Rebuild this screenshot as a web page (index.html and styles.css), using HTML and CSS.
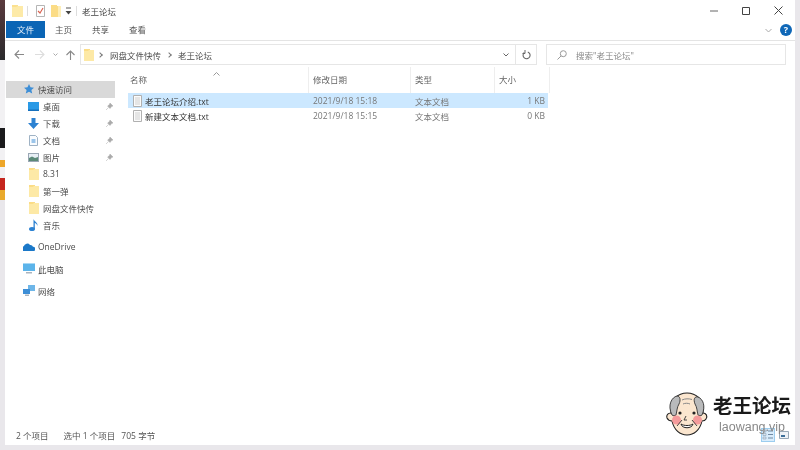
FILE: index.html
```html
<!DOCTYPE html>
<html lang="zh-CN">
<head>
<meta charset="utf-8">
<title>老王论坛</title>
<link rel="stylesheet" href="styles.css">
</head>
<body>
<div class="desktop">
  <div class="wall">
    <div class="w-photo"></div>
    <div class="w-pale"></div>
    <div class="w-dark"></div>
    <div class="w-gap"></div>
    <div class="w-orange"></div>
    <div class="w-gap2"></div>
    <div class="w-red"></div>
    <div class="w-yellow"></div>
  </div>
  <main class="window">
    <header class="titlebar">
      <svg class="ico qa-first" width="11" height="13" viewBox="0 0 11 13"><path d="M0 1h6v1h5v11H0z" fill="#fbe08f"/><path d="M0 3h4l2-1h5v11H0z" fill="#fdeaa8"/></svg>
      <span class="tsep"></span>
      <svg class="ico qa-doc" width="9" height="12" viewBox="0 0 9 12"><path d="M.5.5h8v11h-8z" fill="#fff" stroke="#b5b5b5"/><path d="M2 6l2 2 3-5" fill="none" stroke="#d9604f" stroke-width="1.100"/></svg>
      <svg class="ico qa-fold" width="10" height="13" viewBox="0 0 10 13"><path d="M0 1h6v1h4v11H0z" fill="#fbdc86"/><path d="M7 2h3v11H7z" fill="#fdeeb9"/></svg>
      <svg class="ico qa-down" width="7" height="8" viewBox="0 0 7 8"><path d="M1 1h5" stroke="#555" fill="none"/><path d="M.5 4h6L3.500 7.500z" fill="#444"/></svg>
      <span class="tsep sep2"></span>
      <span class="title">老王论坛</span>
      <div class="winctl">
        <svg width="8" height="8" viewBox="0 0 8 8"><path d="M0 4h8" stroke="#666"/></svg>
        <svg width="8" height="8" viewBox="0 0 8 8"><path d="M.5.5h7v7h-7z" fill="none" stroke="#444"/></svg>
        <svg width="9" height="9" viewBox="0 0 9 9"><path d="M.5.5l8 8M8.500.5l-8 8" stroke="#444" fill="none"/></svg>
      </div>
    </header>
    <nav class="ribbon">
      <span class="tab active">文件</span>
      <span class="tab">主页</span>
      <span class="tab">共享</span>
      <span class="tab">查看</span>
      <svg class="rib-chev" width="7" height="5" viewBox="0 0 7 5"><path d="M.5 1l3 3 3-3" fill="none" stroke="#aaa"/></svg>
      <span class="help">?</span>
    </nav>
    <div class="addressbar">
      <div class="navbtns">
        <svg width="10" height="9" viewBox="0 0 10 9"><path d="M5 .5L1 4.500l4 4M1 4.500h9" fill="none" stroke="#888" stroke-width="1.100"/></svg>
        <svg class="nav-fwd" width="10" height="9" viewBox="0 0 10 9"><path d="M5 .5l4 4-4 4M9 4.500H0" fill="none" stroke="#ddd" stroke-width="1.100"/></svg>
        <svg width="5" height="4" viewBox="0 0 5 4"><path d="M.5 .5l2 2 2-2" fill="none" stroke="#aaa"/></svg>
        <svg width="9" height="10" viewBox="0 0 9 10"><path d="M.5 5l4-4 4 4M4.500 1v9" fill="none" stroke="#888" stroke-width="1.100"/></svg>
      </div>
      <div class="pathbox">
        <svg width="10" height="12" viewBox="0 0 10 12"><path d="M0 0h6v1h4v11H0z" fill="#fbdc86"/><path d="M0 2h4l1-1h5v11H0z" fill="#fde9a6"/></svg>
        <span class="crumb-sep"></span>
        <span class="crumb">网盘文件快传</span>
        <span class="crumb-sep"></span>
        <span class="crumb">老王论坛</span>
        <svg class="path-chev" width="6" height="4" viewBox="0 0 6 4"><path d="M.5.500l2.500 2.500L5.500.5" fill="none" stroke="#666"/></svg>
      </div>
      <div class="refresh">
        <svg width="9" height="10" viewBox="0 0 9 10"><path d="M2.300 2.500a3.500 3.500 0 1 0 3.500-.6" fill="none" stroke="#666" stroke-width="1.100"/><path d="M3 0v3.500H.5" fill="none" stroke="#666"/></svg>
      </div>
      <div class="search">
        <svg width="10" height="10" viewBox="0 0 10 10"><circle cx="6.300" cy="3.700" r="3" fill="none" stroke="#999"/><path d="M4 6L.5 9.500" stroke="#999" fill="none"/></svg>
        <span>搜索"老王论坛"</span>
      </div>
    </div>
    <div class="body">
      <aside class="sidebar">
        <div class="side-row top selected">
          <svg width="10" height="10" viewBox="0 0 10 10"><path d="M5 0l1.500 3.300 3.500.4-2.600 2.300.8 3.500L5 7.700 1.800 9.500l.8-3.500L0 3.700l3.500-.4z" fill="#3d8ed6"/></svg>
          <span>快速访问</span>
        </div>
        <div class="side-row">
          <svg width="11" height="9" viewBox="0 0 11 9"><path d="M0 0h11v8.500H0z" fill="#2a9ae6"/><path d="M0 7.500h11v1.500H0z" fill="#1570bd"/></svg>
          <span>桌面</span>
          <svg class="pin" width="7" height="7" viewBox="0 0 7 7"><path d="M4 0l3 3-1.500.6L4 5.500 1.600 3 3.500 1.500zM2.500 4.500L0 7" fill="#aaa" stroke="#aaa" stroke-width=".5"/></svg>
        </div>
        <div class="side-row">
          <svg width="11" height="11" viewBox="0 0 11 11"><path d="M3.500 0h4v5H11l-5.500 6L0 5h3.500z" fill="#2d82d2"/></svg>
          <span>下载</span>
          <svg class="pin" width="7" height="7" viewBox="0 0 7 7"><path d="M4 0l3 3-1.500.6L4 5.500 1.600 3 3.500 1.500zM2.500 4.500L0 7" fill="#aaa" stroke="#aaa" stroke-width=".5"/></svg>
        </div>
        <div class="side-row">
          <svg width="11" height="11" viewBox="0 0 11 11"><path d="M1.500.5h6l2 2v8h-8z" fill="#fafcfe" stroke="#9fb2c4"/><path d="M3.500 5h4M3.500 7h4" stroke="#3d8ed6"/></svg>
          <span>文档</span>
          <svg class="pin" width="7" height="7" viewBox="0 0 7 7"><path d="M4 0l3 3-1.500.6L4 5.500 1.600 3 3.500 1.500zM2.500 4.500L0 7" fill="#aaa" stroke="#aaa" stroke-width=".5"/></svg>
        </div>
        <div class="side-row">
          <svg width="11" height="9" viewBox="0 0 11 9"><path d="M0 0h11v9H0z" fill="#9aa7b4"/><path d="M1 1h9v7H1z" fill="#e8eff5"/><path d="M1 5l3-1.500L7 5l3-1v4H1z" fill="#5b8a78"/></svg>
          <span>图片</span>
          <svg class="pin" width="7" height="7" viewBox="0 0 7 7"><path d="M4 0l3 3-1.500.6L4 5.500 1.600 3 3.500 1.500zM2.500 4.500L0 7" fill="#aaa" stroke="#aaa" stroke-width=".5"/></svg>
        </div>
        <div class="side-row">
          <svg class="narrow" width="10" height="12" viewBox="0 0 10 12"><path d="M0 0h6v1h4v11H0z" fill="#fbdc86"/><path d="M0 2h4l1-1h5v11H0z" fill="#fde9a6"/></svg>
          <span>8.31</span>
        </div>
        <div class="side-row">
          <svg class="narrow" width="10" height="12" viewBox="0 0 10 12"><path d="M0 0h6v1h4v11H0z" fill="#fbdc86"/><path d="M0 2h4l1-1h5v11H0z" fill="#fde9a6"/></svg>
          <span>第一弹</span>
        </div>
        <div class="side-row">
          <svg class="narrow" width="10" height="12" viewBox="0 0 10 12"><path d="M0 0h6v1h4v11H0z" fill="#fbdc86"/><path d="M0 2h4l1-1h5v11H0z" fill="#fde9a6"/></svg>
          <span>网盘文件快传</span>
        </div>
        <div class="side-row">
          <svg class="narrow" width="10" height="12" viewBox="0 0 10 12"><ellipse cx="3" cy="10" rx="3" ry="2" fill="#2d82d2"/><path d="M4.500 10V0c.5 2.500 4.500 3 4 7-.5-2-2-3-2.700-3V10z" fill="#2d82d2"/></svg>
          <span>音乐</span>
        </div>
        <div class="side-row top wide gap-a">
          <svg width="12" height="8" viewBox="0 0 12 8"><path d="M0 8a2.500 2.500 0 0 1 .8-4.700A3.500 3.500 0 0 1 7 2a2.800 2.800 0 0 1 3 1.800A2.200 2.200 0 0 1 11 8z" fill="#1b78c8"/></svg>
          <span>OneDrive</span>
        </div>
        <div class="side-row top wide gap-b">
          <svg width="12" height="11" viewBox="0 0 12 11"><path d="M0 0h12v8H0z" fill="#5cb4ea"/><path d="M0 0h12v1H0z" fill="#a8d8f4"/><path d="M3 9h6v1.500H3z" fill="#aab4be"/></svg>
          <span>此电脑</span>
        </div>
        <div class="side-row top wide gap-b">
          <svg width="12" height="11" viewBox="0 0 12 11"><path d="M5 0h7v6H5z" fill="#6eb6e8"/><path d="M0 4h7v5H0z" fill="#3d8ed6"/><path d="M2 9.500h4v1.500H2z" fill="#aab4be"/></svg>
          <span>网络</span>
        </div>
      </aside>
      <section class="files">
        <div class="cols head">
          <span class="name">名称<svg class="sort" width="7" height="4" viewBox="0 0 7 4"><path d="M.5 3.500l3-3 3 3" fill="none" stroke="#999"/></svg></span>
          <span>修改日期</span>
          <span>类型</span>
          <span>大小</span>
        </div>
        <div class="cols row picked">
          <span class="name"><svg width="9" height="12" viewBox="0 0 9 12"><path d="M.5.5h8v11h-8z" fill="#fbfbfb" stroke="#b0b0b0"/><path d="M2 3h5M2 5h5M2 7h5M2 9h5" stroke="#cfcfcf"/></svg>老王论坛介绍.txt</span>
          <span class="muted">2021/9/18 15:18</span>
          <span class="muted">文本文档</span>
          <span class="muted size">1 KB</span>
        </div>
        <div class="cols row">
          <span class="name"><svg width="9" height="12" viewBox="0 0 9 12"><path d="M.5.5h8v11h-8z" fill="#fbfbfb" stroke="#b0b0b0"/><path d="M2 3h5M2 5h5M2 7h5M2 9h5" stroke="#cfcfcf"/></svg>新建文本文档.txt</span>
          <span class="muted">2021/9/18 15:15</span>
          <span class="muted">文本文档</span>
          <span class="muted size">0 KB</span>
        </div>
      </section>
    </div>
    <footer class="status">
      <span class="s1">2 个项目</span>
      <span class="s2">选中 1 个项目</span>
      <span class="s3">705 字节</span>
      <div class="views">
        <span class="v-on"><svg width="12" height="11" viewBox="0 0 12 11"><path d="M1 1h3v2H1zM1 4.500h3v2H1zM1 8h3v2H1z" fill="#dfe6ec" stroke="#8aa2b8" stroke-width=".6"/><path d="M6 2h5M6 5.500h5M6 9h5" stroke="#6f8aa3"/></svg></span>
        <svg class="v-off" width="10" height="8" viewBox="0 0 10 8"><path d="M.5.5h9v7h-9z" fill="#eef2f6" stroke="#98a8b6"/><path d="M2 4h4v2H2z" fill="#3d6f99"/></svg>
      </div>
    </footer>
    <div class="logo">
      <svg class="face" width="44" height="46" viewBox="0 0 44 46">
        <path d="M6 22C4 8 14 2 22 2s18 6 16 20c3 0 5 3 3 6-1 2-3 2-4 2-2 9-8 14-15 14S9 39 7 30c-2 0-4-1-5-3-1-3 1-5 4-5z" fill="#fbe6cf" stroke="#222" stroke-width="1.100"/>
        <path d="M7 24C2 14 7 6 12 5c3 0 4 4 2 8-2 3-2 7-3 11-1 1-3 1-4 0zM37 24c4-9 1-16-4-18-3-1-5 2-3 7 2 3 2 7 3 11 1 1 3 1 4 0z" fill="#b9babb" stroke="#333" stroke-width=".9"/>
        <path d="M17 9c3-1.500 7-1.500 10-.5M18 13c2-1 5-1 7 0" fill="none" stroke="#888" stroke-width="1"/>
        <circle cx="11.500" cy="29" r="4.500" fill="#f59b9b"/>
        <circle cx="32.500" cy="29" r="4.500" fill="#f59b9b"/>
        <circle cx="15" cy="22" r="1.600" fill="#222"/>
        <circle cx="29" cy="22" r="1.600" fill="#222"/>
        <path d="M21 25l-2 4h3M12 35l5-6M32 35l-5-6" fill="none" stroke="#333" stroke-width=".9"/>
        <path d="M16 33c3 2 9 2 12 0-1 5-11 5-12 0z" fill="#fff" stroke="#222" stroke-width="1"/>
      </svg>
      <div class="logo-text">
        <strong>老王论坛</strong>
        <span>laowang.vip</span>
      </div>
    </div>
  </main>
</div>
</body>
</html>
```
FILE: styles.css
```css
* { box-sizing: border-box; }
html, body { margin: 0; height: 100%; }
body {
  width: 800px;
  height: 450px;
  overflow: hidden;
  background: #e9e7eb;
  font-family: "Open Sans", "Noto Sans CJK SC", sans-serif;
  font-size: 8.5px;
  color: #555;
}
svg { display: block; flex: none; }
.desktop { display: flex; height: 450px; }
.wall { width: 5px; flex: none; display: flex; flex-direction: column; }
.w-photo { height: 60px; background: linear-gradient(#5a3a3e, #2a2a2c); }
.w-pale { height: 68px; background: #f2f1f3; }
.w-dark { height: 20px; background: #1a1a1c; }
.w-gap { height: 12px; background: #f2f1f3; }
.w-orange { height: 7px; background: #eda62a; }
.w-gap2 { height: 11px; background: #f2f1f3; }
.w-red { height: 12px; background: #c5261e; }
.w-yellow { height: 10px; background: #e9a92c; }

.window {
  position: relative;
  width: 790px;
  height: 445px;
  flex: none;
  background: #fff;
  display: flex;
  flex-direction: column;
  filter: blur(.35px);
}

.titlebar { height: 21px; flex: none; display: flex; align-items: center; padding-left: 7px; }
.qa-first { margin-right: 4px; }
.tsep { width: 1px; height: 10px; background: #ddd; }
.qa-doc { margin-left: 8px; }
.qa-fold { margin-left: 6px; }
.qa-down { margin-left: 4px; }
.sep2 { margin-left: 4px; }
.title { margin-left: 5px; color: #444; }
.winctl { margin-left: auto; display: flex; align-items: center; gap: 24px; padding-right: 12px; }

.ribbon {
  height: 20px;
  flex: none;
  display: flex;
  align-items: flex-start;
  border-bottom: 1px solid #e4e4e4;
  padding-left: 1px;
}
.tab { width: 37px; height: 17px; line-height: 17px; text-align: center; color: #555; }
.tab.active { width: 39px; background: #0b65b5; color: #e6f0fa; }
.rib-chev { margin: 7px 0 0 auto; }
.help {
  width: 12px; height: 12px; margin: 3px 3px 0 8px; border-radius: 50%;
  background: #0f67b7; color: #fff; font-weight: 700; font-size: 9px; line-height: 12px; text-align: center;
}

.addressbar { height: 24px; flex: none; display: flex; align-items: center; padding: 3px 0 0 0; }
.navbtns { width: 75px; flex: none; display: flex; align-items: center; gap: 8px; padding-left: 9px; }
.nav-fwd { margin-left: 3px; }
.pathbox {
  width: 435px; height: 21px; flex: none; display: flex; align-items: center;
  border: 1px solid #e6e6e6; border-right: 0; padding-left: 3px; color: #4c4c4c;
}
.crumb-sep {
  width: 4px; height: 4px; margin: 0 8px 0 4px; flex: none;
  border-top: 1px solid #777; border-right: 1px solid #777; transform: rotate(45deg);
}
.crumb + .crumb-sep { margin-left: 6px; margin-right: 7px; }
.path-chev { margin-left: auto; margin-right: 6px; }
.refresh {
  width: 22px; height: 21px; flex: none; display: flex; align-items: center; justify-content: center;
  border: 1px solid #e6e6e6;
}
.search {
  width: 240px; height: 21px; margin-left: 9px; flex: none; display: flex; align-items: center; gap: 9px;
  border: 1px solid #e6e6e6; padding-left: 10px; color: #888;
}

.body { flex: 1; display: flex; min-height: 0; padding-top: 2px; }
.sidebar { width: 119px; flex: none; padding: 14px 0 0 1px; }
.side-row { width: 109px; height: 16.9px; display: flex; align-items: center; gap: 4px; padding-left: 22px; color: #4c4c4c; }
.side-row .narrow { margin-left: 1px; }
.side-row.top { padding-left: 18px; }
.side-row.wide { padding-left: 17px; gap: 3px; }
.side-row.selected { background: #d9d9d9; }
.pin { margin-left: auto; margin-right: 2px; }
.gap-a { margin-top: 5.5px; }
.gap-b { margin-top: 5px; }

.files { flex: 1; padding: 0 0 0 4px; }
.cols { display: grid; grid-template-columns: 181px 102px 84px 55px; width: 420px; align-items: center; }
.head { height: 26px; color: #666; }
.head > span { height: 26px; line-height: 26px; padding-left: 4px; border-right: 1px solid #eeeeee; position: relative; }
.head .name { padding-left: 2px; }
.sort { position: absolute; left: 85px; top: 5px; }
.row { height: 15px; }
.row > span { padding-left: 4px; white-space: nowrap; }
.row .name { display: flex; align-items: center; gap: 3px; padding-left: 5px; color: #333; }
.picked { background: #cce8ff; }
.muted { color: #777; }
.row .size { text-align: right; padding-right: 5px; }

.status {
  height: 21px; flex: none; display: flex; align-items: center; padding: 0 6px 0 11px; color: #555;
}
.s2 { margin-left: 15px; }
.s3 { margin-left: 6px; }
.views { margin-left: auto; display: flex; align-items: center; gap: 4px; }
.v-on { width: 14px; height: 14px; display: flex; align-items: center; justify-content: center; background: #d9ecfb; border: 1px solid #9ccdef; }

.logo { position: absolute; left: 660px; top: 391px; display: flex; gap: 4px; }
.logo-text { display: flex; flex-direction: column; align-items: center; }
.logo-text strong { font-family: "Noto Sans CJK SC", sans-serif; font-size: 19.5px; line-height: 28.5px; font-weight: 700; color: #1a1a1a; white-space: nowrap; }
.logo-text span { font-family: "Liberation Sans", sans-serif; font-size: 12.5px; line-height: 14.5px; color: #888; }
```
